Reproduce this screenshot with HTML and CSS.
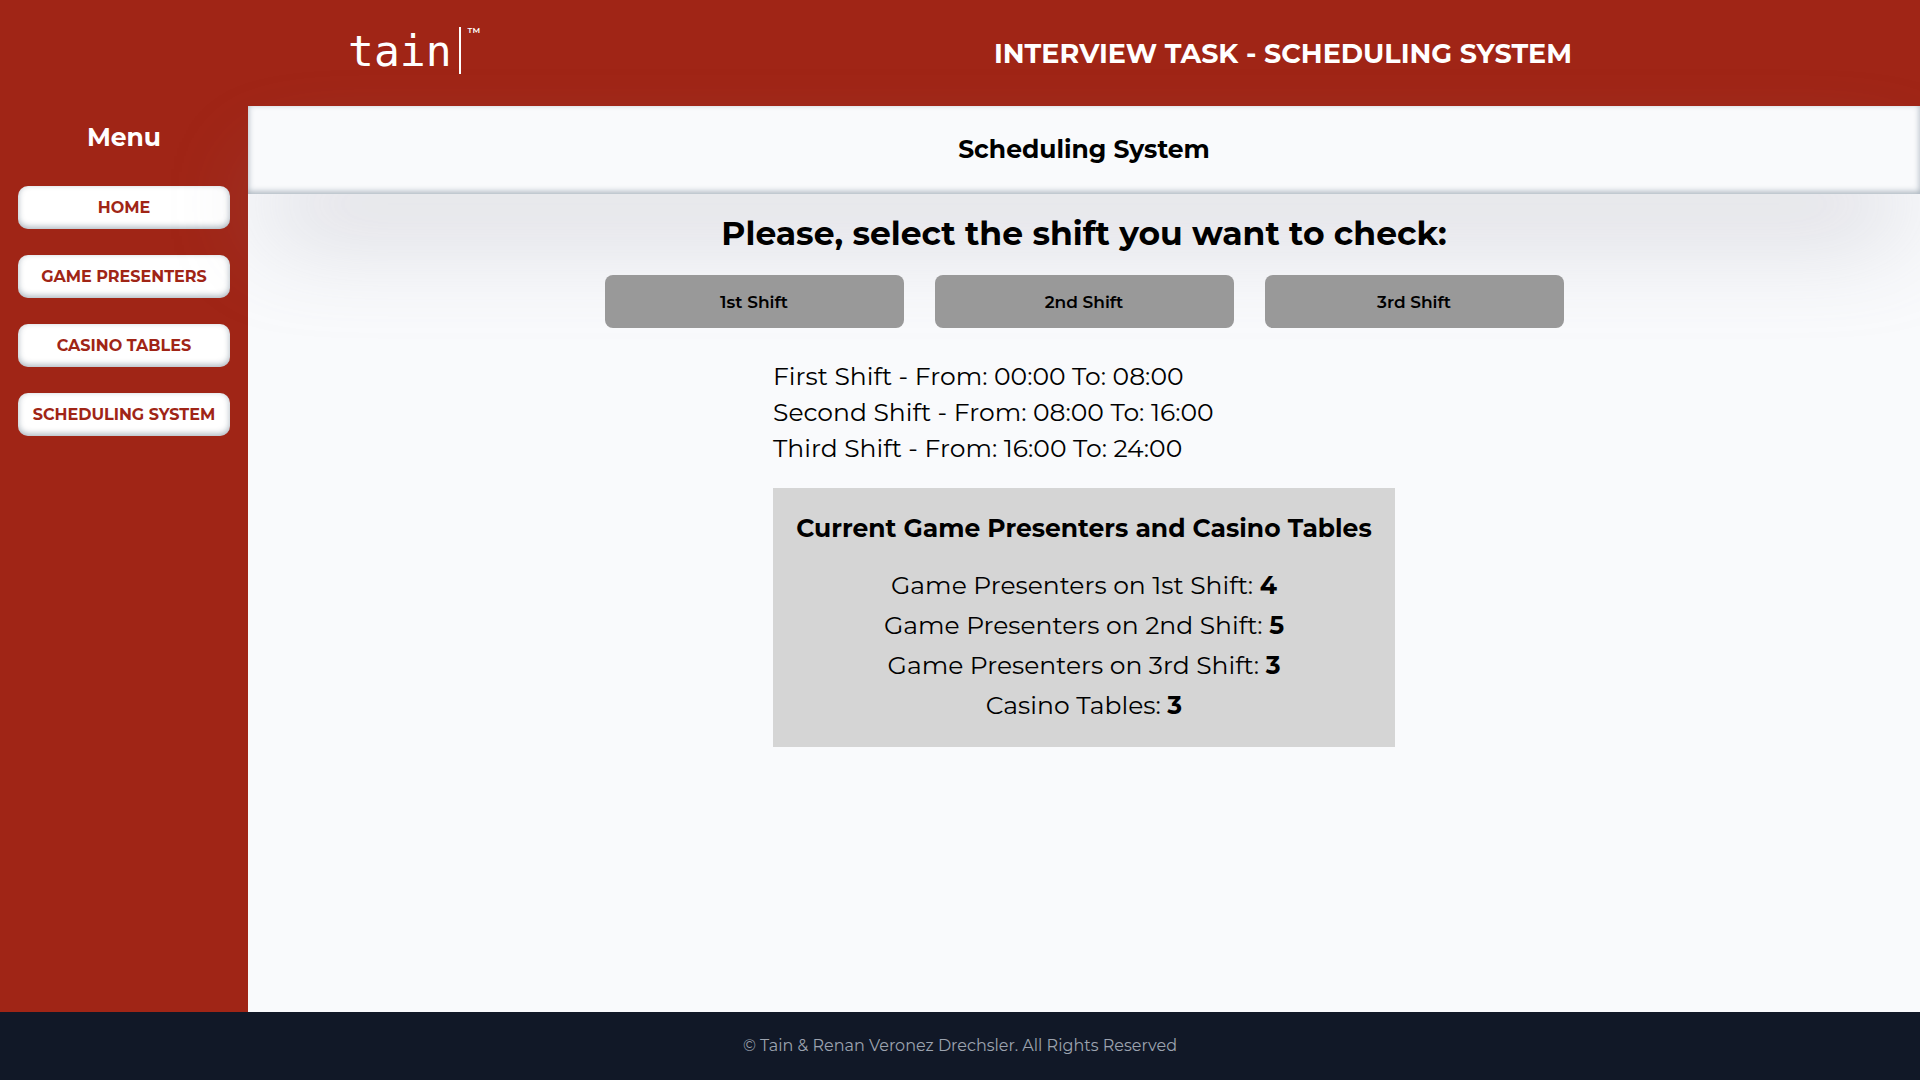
FILE: index.html
```html
<!DOCTYPE html>
<html lang="en">
<head>
  <meta charset="utf-8">
  <meta name="viewport" content="width=device-width, initial-scale=1">
  <title>Scheduling System</title>
  <link rel="stylesheet" href="styles.css">
</head>
<body>
  <header class="site-header">
    <div class="header-inner">
      <a class="logo" href="#"><span class="logo-name">tain</span><span class="logo-bar"></span><span class="logo-mark">TM</span></a>
      <p class="site-title">INTERVIEW TASK - SCHEDULING SYSTEM</p>
    </div>
  </header>

  <div class="layout">
    <nav class="sidebar" aria-labelledby="menu-title">
      <h2 class="menu-title" id="menu-title">Menu</h2>
      <div class="menu">
        <button class="menu-button" type="button">HOME</button>
        <button class="menu-button" type="button">GAME PRESENTERS</button>
        <button class="menu-button" type="button">CASINO TABLES</button>
        <button class="menu-button" type="button">SCHEDULING SYSTEM</button>
      </div>
    </nav>

    <main class="content">
      <div class="page-header">
        <h1 class="page-title">Scheduling System</h1>
      </div>
      <section class="shifts">
        <h2 class="prompt">Please, select the shift you want to check:</h2>
        <div class="shift-buttons">
          <button class="shift-button" type="button">1st Shift</button>
          <button class="shift-button" type="button">2nd Shift</button>
          <button class="shift-button" type="button">3rd Shift</button>
        </div>
        <div class="details">
          <ul class="hours">
            <li>First Shift - From: 00:00 To: 08:00</li>
            <li>Second Shift - From: 08:00 To: 16:00</li>
            <li>Third Shift - From: 16:00 To: 24:00</li>
          </ul>
          <div class="summary">
            <h3 class="summary-title">Current Game Presenters and Casino Tables</h3>
            <p class="summary-row">Game Presenters on 1st Shift: <strong>4</strong></p>
            <p class="summary-row">Game Presenters on 2nd Shift: <strong>5</strong></p>
            <p class="summary-row">Game Presenters on 3rd Shift: <strong>3</strong></p>
            <p class="summary-row">Casino Tables: <strong>3</strong></p>
          </div>
        </div>
      </section>
    </main>
  </div>

  <footer class="site-footer">© Tain &amp; Renan Veronez Drechsler. All Rights Reserved</footer>
</body>
</html>
```

FILE: styles.css
```css
* {
  box-sizing: border-box;
  margin: 0;
  padding: 0;
}

body {
  display: flex;
  flex-direction: column;
  min-height: 100vh;
  background: #f9fafc;
  color: #000;
  font-family: Montserrat, Inter, "Open Sans", sans-serif;
  font-size: 25px;
}

button {
  border: 0;
  font-family: inherit;
  cursor: pointer;
}

.site-header {
  padding: 27px 16px 26px;
  background: #a02516;
  color: #fff;
}

.header-inner {
  display: flex;
  align-items: center;
  justify-content: space-between;
  max-width: 1224px;
  margin: 0 auto;
}

.logo {
  display: flex;
  align-items: flex-start;
  padding-bottom: 5px;
  color: inherit;
  text-decoration: none;
}

.logo-name {
  font: 43px/48px "DejaVu Sans Mono", monospace;
}

.logo-bar {
  width: 2px;
  height: 47px;
  margin: 0 7px;
  background: #fff;
}

.logo-mark {
  font-size: 8px;
  font-weight: 600;
  line-height: 6px;
}

.site-title {
  font-size: 27px;
  font-weight: 700;
}

.layout {
  display: flex;
  flex: 1;
}

.sidebar {
  flex: 0 0 248px;
  padding: 16px 18px;
  background: #a02516;
}

.menu-title {
  margin-bottom: 34px;
  color: #fff;
  font-size: 25px;
  font-weight: 700;
  line-height: 30px;
  text-align: center;
}

.menu {
  display: grid;
  gap: 26px;
}

.menu-button {
  height: 43px;
  border-radius: 10px;
  background: #fff;
  box-shadow: inset 0 -2px 6px rgba(10, 37, 64, 0.35);
  color: #a02516;
  font-size: 16px;
  font-weight: 700;
}

.content {
  flex: 1;
  min-width: 0;
}

.page-header {
  padding: 27px 16px 29px;
  box-shadow:
    0 54px 100px -20px rgba(150, 150, 166, 0.47),
    inset 0 -2px 6px rgba(10, 37, 64, 0.35);
  text-align: center;
}

.page-title {
  font-size: 25px;
  font-weight: 700;
  line-height: 32px;
}

.shifts {
  display: flex;
  flex-direction: column;
  align-items: center;
  padding: 19px 16px;
}

.prompt {
  margin-bottom: 22px;
  font-size: 33px;
  font-weight: 700;
  line-height: 40px;
}

.shift-buttons {
  display: grid;
  grid-template-columns: repeat(3, 1fr);
  gap: 31px;
  width: 100%;
  max-width: 959px;
}

.shift-button {
  height: 53px;
  border-radius: 8px;
  background: #999;
  color: #000;
  font-size: 17px;
  font-weight: 600;
}

.details {
  width: 100%;
  max-width: 622px;
  padding-top: 30px;
}

.hours {
  margin-bottom: 22px;
  line-height: 36px;
  list-style: none;
}

.summary {
  padding: 20px 16px 22px;
  background: #d5d5d5;
  line-height: 40px;
  text-align: center;
}

.summary-title {
  margin-bottom: 17px;
  font-size: 25px;
  font-weight: 700;
}

.site-footer {
  padding: 22px 16px;
  background: #111827;
  color: #9ca3af;
  font-size: 16px;
  line-height: 24px;
  text-align: center;
}
```
